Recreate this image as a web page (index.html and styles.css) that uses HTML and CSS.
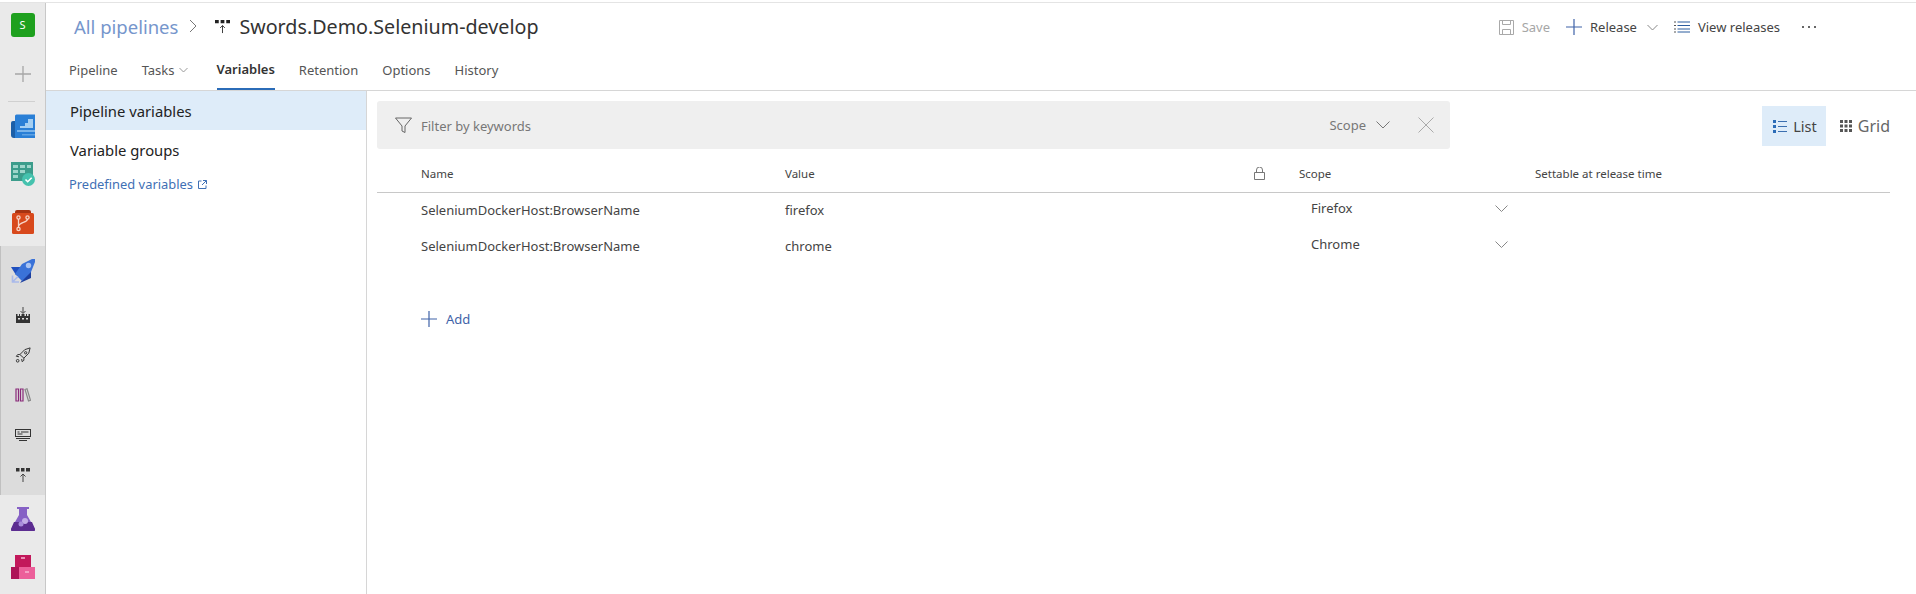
FILE: index.html
```html
<!DOCTYPE html>
<html>
    <head>
        <title>Swords.Demo.Selenium-develop - Variables</title>
        <link rel="stylesheet" href="styles.css">
    </head>
    <body>
        <div class="app">
            <!-- Left navigation rail -->
            <nav class="rail">
                <div class="rail-item rail-org"><span class="org-badge">S</span></div>
                <div class="rail-item rail-plus">
                    <svg width="18" height="18" viewBox="0 0 18 18"><path d="M9 1v16M1 9h16" stroke="#a6a6a6" stroke-width="1.3" fill="none"/></svg>
                </div>
                <div class="rail-divider"></div>
                <div class="rail-item">
                    <svg width="24" height="24" viewBox="0 0 24 24">
                        <path d="M0 9a2 2 0 0 1 2-2h4v17H3a3 3 0 0 1-3-3z" fill="#1b5fa8"/>
                        <path d="M4 2a1.5 1.5 0 0 1 1.5-1.5H24V24H4z" fill="#2a7fd6"/>
                        <path d="M9 12h5V9h3V5h5v9H9z" fill="#a5cff2"/>
                        <path d="M6 16h18v2H6z" fill="#7ab4ea"/>
                        <path d="M11 20h13v1.5H11z" fill="#5ea3e4"/>
                    </svg>
                </div>
                <div class="rail-item">
                    <svg width="24" height="24" viewBox="0 0 24 24">
                        <rect x="0" y="0" width="22" height="19" fill="#3c9d8c"/>
                        <path d="M2 3h5v3H2zM9 3h5v3H9zM16 3h4v3h-4zM2 8h5v3H2zM9 8h5v3H9zM2 13h5v3H2z" fill="#9ed6cb"/>
                        <circle cx="17.5" cy="17.5" r="6.5" fill="#45c2ae"/>
                        <path d="M14.5 17.5l2.2 2.2 4-4" stroke="#fff" stroke-width="1.6" fill="none"/>
                    </svg>
                </div>
                <div class="rail-item">
                    <svg width="24" height="24" viewBox="0 0 24 24">
                        <path d="M4 2a2 2 0 0 1 2-2h12a2 2 0 0 1 2 2v2H4z" fill="#a63312"/>
                        <rect x="1" y="3" width="22" height="21" rx="1.5" fill="#d8491c"/>
                        <g stroke="#f7d5c8" stroke-width="1.3" fill="none">
                            <circle cx="7.5" cy="7.5" r="1.6"/><circle cx="16.5" cy="7.5" r="1.6"/><circle cx="7.5" cy="19" r="1.6"/>
                            <path d="M7.5 9v8.500M16.5 9c0 4-9 3-9 8"/>
                        </g>
                    </svg>
                </div>
                <div class="rail-group">
                    <div class="rail-item">
                        <svg width="24" height="24" viewBox="0 0 24 24">
                            <path d="M0 8h11L5 16z" fill="#1f4fbf"/>
                            <path d="M9 24l11-5v-9z" fill="#1d3f9e"/>
                            <path d="M11 5L21 0h3v3l-4 10-9 9-7-7z" fill="#3a72d8"/>
                            <circle cx="17.5" cy="6.5" r="2.7" fill="#a9c3f2"/>
                            <path d="M1.500 16.500V23H8M1.500 23L7 17.500" stroke="#a9b9ea" stroke-width="1.6" fill="none"/>
                        </svg>
                    </div>
                    <div class="rail-sub">
                        <svg width="16" height="16" viewBox="0 0 16 16">
                            <path d="M8 0v6M5.500 4L8 6.500 10.500 4" stroke="#444" stroke-width="1" fill="none"/>
                            <path d="M1 7h1.500v2H4V7h1v2h1.500V7h3v2H11V7h1v2h1.500V7H15v9H1z" fill="#333"/>
                            <path d="M3 11h2v1.500H3zM7 11h2v1.500H7zM11 11h2v1.500h-2z" fill="#ddd"/>
                        </svg>
                    </div>
                    <div class="rail-sub">
                        <svg width="16" height="16" viewBox="-1 -1 18 18" fill="none" stroke="#333" stroke-width="1.1">
                            <path d="M4.500 7.500L10 2l6-2-1.500 6L9 11.500z"/>
                            <path d="M4.500 7.500H2L.5 9.500l3 .5M9 11.500V14l-2 1.500-.5-3"/>
                            <circle cx="11" cy="5.500" r="1.3"/>
                            <circle cx="2" cy="14.500" r="1.5"/>
                        </svg>
                    </div>
                    <div class="rail-sub">
                        <svg width="16" height="16" viewBox="0 0 16 16" fill="none" stroke-width="1.2">
                            <path d="M1 2h2.500v12H1zM5.500 2H8v12H5.500z" stroke="#8a2a7a"/>
                            <path d="M10 2.500l2-.7 3.500 11.500-2 .7z" stroke="#888"/>
                        </svg>
                    </div>
                    <div class="rail-sub">
                        <svg width="16" height="16" viewBox="0 0 16 16" fill="none" stroke="#333" stroke-width="1">
                            <rect x=".5" y="2.500" width="15" height="7"/>
                            <path d="M2.500 5h2M6 5h7.500M2.500 7h5M1 11.500h14M4 13.500h8"/>
                        </svg>
                    </div>
                    <div class="rail-sub">
                        <svg width="16" height="16" viewBox="0 0 16 16">
                            <path d="M1 1h3.500v3.500H1zM6 1h3.500v3.500H6zM11 1h4v3.500h-4z" fill="#333"/>
                            <path d="M8 15V7M5.500 9.500L8 7l2.500 2.500" stroke="#444" stroke-width="1" fill="none"/>
                        </svg>
                    </div>
                </div>
                <div class="rail-item">
                    <svg width="24" height="24" viewBox="0 0 24 24">
                        <path d="M6 0h12v2h-2v6l8 14a1.500 1.500 0 0 1-1.500 2h-21A1.500 1.500 0 0 1 0 22L8 8V2H6z" fill="#8661c5"/>
                        <path d="M3 15h18l3 7a1.500 1.500 0 0 1-1.500 2h-21A1.500 1.500 0 0 1 0 22z" fill="#5c2d91"/>
                        <circle cx="14" cy="14" r="3" fill="#c3aee6"/>
                        <circle cx="10" cy="17" r="2.5" fill="#a98ddb"/>
                    </svg>
                </div>
                <div class="rail-item">
                    <svg width="24" height="24" viewBox="0 0 24 24">
                        <rect x="4" y="0" width="16" height="12" fill="#c2185b"/>
                        <rect x="0" y="12" width="12" height="12" fill="#ad1457"/>
                        <rect x="8" y="12" width="16" height="12" fill="#ec5f9a"/>
                        <path d="M10 3h4M14 17h4" stroke="#f7b6d2" stroke-width="1.5"/>
                    </svg>
                </div>
            </nav>

            <div class="page">
                <header class="page-header">
                    <div class="title-row">
                        <a class="crumb">All pipelines</a>
                        <svg class="crumb-sep" width="9" height="14" viewBox="0 0 9 14"><path d="M1 1l6 6-6 6" stroke="#777" stroke-width="1" fill="none"/></svg>
                        <svg class="title-icon" width="15" height="15" viewBox="0 0 16 16">
                            <path d="M0 1h4v3.500H0zM6 1h4v3.500H6zM12 1h4v3.500h-4z" fill="#222"/>
                            <path d="M8 15V7M5.500 9.500L8 7l2.500 2.500" stroke="#333" stroke-width="1" fill="none"/>
                        </svg>
                        <h1 class="title">Swords.Demo.Selenium-develop</h1>
                        <div class="actions">
                            <span class="action action-off">
                                <svg width="15" height="15" viewBox="0 0 15 15" fill="none" stroke="#a9a9a9"><path d="M.5.5h14v14H.5zM3.500.5v4h8v-4M3.500 14.500v-5h8v5"/></svg>
                                Save
                            </span>
                            <span class="action action-release">
                                <svg width="16" height="16" viewBox="0 0 16 16"><path d="M8 0v16M0 8h16" stroke="#3f63a8" stroke-width="1.2" fill="none"/></svg>
                                Release
                                <svg class="chev" width="11" height="7" viewBox="0 0 11 7"><path d="M.5 1l5 5 5-5" stroke="#888" fill="none"/></svg>
                            </span>
                            <span class="action action-view">
                                <svg width="16" height="12" viewBox="0 0 16 12" fill="none"><path d="M3.500 1H16M3.500 4.500H16M3.500 8H16M3.500 11H16" stroke="#2b5c9e"/><path d="M0 1h2M0 4.500h2M0 8h2M0 11h2" stroke="#555"/></svg>
                                View releases
                            </span>
                            <span class="more"><i></i><i></i><i></i></span>
                        </div>
                    </div>
                    <div class="tabs">
                        <span class="tab">Pipeline</span>
                        <span class="tab tab-menu">Tasks<svg class="tab-chev" width="9" height="6" viewBox="0 0 9 6"><path d="M.5 1l4 4 4-4" stroke="#999" fill="none"/></svg></span>
                        <span class="tab tab-active">Variables</span>
                        <span class="tab">Retention</span>
                        <span class="tab">Options</span>
                        <span class="tab">History</span>
                    </div>
                </header>

                <div class="content">
                    <aside class="side">
                        <div class="side-item side-item-on">Pipeline variables</div>
                        <div class="side-item">Variable groups</div>
                        <a class="side-link">Predefined variables
                            <svg width="9" height="9" viewBox="0 0 9 9" fill="none" stroke="#3f70b5"><path d="M3.500 1H.5v7.500H8V5.500M5 .5h3.500V4M8.500.5L4 5"/></svg>
                        </a>
                    </aside>

                    <main class="vars">
                        <div class="vars-top">
                            <div class="filter">
                                <svg width="17" height="17" viewBox="0 0 17 17" fill="none" stroke="#666"><path d="M.5 1h16L10 9v6.500l-3-1.500V9z"/></svg>
                                <span class="filter-text">Filter by keywords</span>
                                <span class="filter-scope">Scope</span>
                                <svg class="filter-chev" width="14" height="8" viewBox="0 0 14 8"><path d="M.5.5L7 7 13.500.5" stroke="#777" fill="none"/></svg>
                                <svg class="filter-x" width="16" height="16" viewBox="0 0 16 16"><path d="M.5.5l15 15M15.500.5l-15 15" stroke="#aaa" fill="none"/></svg>
                            </div>
                            <div class="views">
                                <span class="view view-on">
                                    <svg width="14" height="13" viewBox="0 0 14 13"><path d="M0 0h3v3H0zM0 5h3v3H0zM0 10h3v3H0z" fill="#2b6cb8"/><path d="M5 1.500h9M5 6.500h9M5 11.500h9" stroke="#3b6fb0"/></svg>
                                    List
                                </span>
                                <span class="view">
                                    <svg width="12" height="12" viewBox="0 0 12 12" fill="#555"><path d="M0 0h3v3H0zM4.500 0h3v3h-3zM9 0h3v3H9zM0 4.500h3v3H0zM4.500 4.500h3v3h-3zM9 4.500h3v3H9zM0 9h3v3H0zM4.500 9h3v3h-3zM9 9h3v3H9z"/></svg>
                                    Grid
                                </span>
                            </div>
                        </div>

                        <div class="grid grid-head">
                            <span></span>
                            <span>Name</span>
                            <span>Value</span>
                            <span class="lock-cell">
                                <svg width="11" height="13" viewBox="0 0 11 13" fill="none" stroke="#777"><path d="M.5 5.500h10v7H.5zM2.500 5.500V3a3 3 0 0 1 6 0v2.500"/></svg>
                            </span>
                            <span>Scope</span>
                            <span>Settable at release time</span>
                        </div>
                        <div class="grid-rows">
                            <div class="grid grid-row">
                                <span></span>
                                <span>SeleniumDockerHost:BrowserName</span>
                                <span>firefox</span>
                                <span></span>
                                <span class="scope">Firefox<svg width="13" height="7" viewBox="0 0 13 7"><path d="M.5.5l6 6 6-6" stroke="#888" fill="none"/></svg></span>
                                <span></span>
                            </div>
                            <div class="grid grid-row">
                                <span></span>
                                <span>SeleniumDockerHost:BrowserName</span>
                                <span>chrome</span>
                                <span></span>
                                <span class="scope">Chrome<svg width="13" height="7" viewBox="0 0 13 7"><path d="M.5.5l6 6 6-6" stroke="#888" fill="none"/></svg></span>
                                <span></span>
                            </div>
                        </div>
                        <div class="add">
                            <svg width="16" height="16" viewBox="0 0 16 16"><path d="M8 0v16M0 8h16" stroke="#3f63a8" stroke-width="1.2" fill="none"/></svg>
                            Add
                        </div>
                    </main>
                </div>
            </div>
        </div>
    </body>
</html>
```

FILE: styles.css
```css
* {
    box-sizing: border-box;
}
html,
body {
    margin: 0;
    height: 100%;
    overflow: hidden;
}
body {
    font-family: "Noto Sans", "Open Sans", Arial, sans-serif;
    font-size: 13px;
    color: #333;
    background: white;
}
.app {
    display: flex;
    height: 594px;
    margin-top: 2px;
    border-top: 1px solid #e4e4e4;
}

/* left rail */
.rail {
    width: 46px;
    flex: none;
    background: #eaeaea;
    border-right: 1px solid #c8c8c8;
}
.rail-item {
    height: 48px;
    display: flex;
    align-items: center;
    justify-content: center;
}
.rail-org {
    height: 44px;
}
.org-badge {
    width: 24px;
    height: 24px;
    background: #1ea01e;
    border-radius: 3px;
    color: white;
    font-size: 11px;
    text-align: center;
    line-height: 24px;
}
.rail-plus {
    height: 54px;
}
.rail-divider {
    height: 1px;
    margin: 0 10px 0 8px;
    background: #d0d0d0;
}
.rail-group {
    background: #dcdcdc;
    border-left: 1px solid #c0c0c0;
    padding-top: 1px;
}
.rail-sub {
    height: 40px;
    display: flex;
    align-items: center;
    justify-content: center;
}

/* header */
.page {
    flex: 1;
    min-width: 0;
    display: flex;
    flex-direction: column;
}
.page-header {
    height: 88px;
    border-bottom: 1px solid #d6d6d6;
    flex: none;
}
.title-row {
    height: 46px;
    display: flex;
    align-items: center;
    padding-left: 28px;
}
.crumb {
    font-size: 18.5px;
    color: #7696cc;
}
.crumb-sep {
    margin-left: 11px;
}
.title-icon {
    margin-left: 17px;
}
.title {
    margin: 0 0 0 9px;
    font-size: 19.7px;
    font-weight: 400;
    color: #333;
}
.actions {
    margin-left: auto;
    display: flex;
    align-items: center;
    padding: 2px 100px 0 0;
}
.action {
    display: flex;
    align-items: center;
    gap: 8px;
    color: #444;
}
.action-off {
    color: #a6a6a6;
}
.action-release {
    margin-left: 16px;
}
.action-release .chev {
    margin-left: 2px;
}
.action-view {
    margin-left: 16px;
}
.more {
    margin-left: 22px;
    display: flex;
    gap: 4px;
}
.more i {
    width: 2px;
    height: 2px;
    background: #333;
    border-radius: 50%;
}
.tabs {
    height: 41px;
    display: flex;
    padding-left: 23px;
    gap: 24px;
}
.tab {
    height: 41px;
    color: #555;
    display: flex;
    align-items: center;
}
.tab-menu {
    padding-right: 5px;
}
.tab-chev {
    margin-left: 4px;
}
.tab-active {
    color: #333;
    font-weight: 600;
    border-bottom: 2px solid #2b6cb8;
}

/* side panel */
.content {
    flex: 1;
    display: flex;
    min-height: 0;
}
.side {
    width: 321px;
    flex: none;
    border-right: 1px solid #d6d6d6;
}
.side-item {
    height: 39px;
    line-height: 41px;
    padding-left: 24px;
    font-size: 14.8px;
    color: #222;
}
.side-item-on {
    background: #deecf9;
}
.side-link {
    display: flex;
    align-items: center;
    gap: 5px;
    margin-top: 6px;
    padding-left: 23px;
    font-size: 12.9px;
    color: #3f70b5;
}

/* variables table */
.vars {
    flex: 1;
    min-width: 0;
    padding: 10px 26px 0 10px;
}
.vars-top {
    display: flex;
    justify-content: space-between;
    align-items: center;
    height: 48px;
}
.filter {
    width: 1073px;
    height: 48px;
    background: #efefef;
    border-radius: 3px;
    display: flex;
    align-items: center;
    padding: 0 16px 0 18px;
}
.filter-text {
    margin-left: 9px;
    color: #777;
    padding-top: 2px;
}
.filter-scope {
    margin-left: auto;
    color: #777;
}
.filter-chev {
    margin-left: 10px;
}
.filter-x {
    margin-left: 28px;
}
.views {
    display: flex;
    align-items: center;
    font-size: 16px;
    padding-top: 2px;
}
.view {
    height: 40px;
    display: flex;
    align-items: center;
    gap: 6px;
    padding: 0 9px 0 11px;
    color: #666;
}
.view-on {
    background: #deecf9;
    color: #444;
    margin-right: 3px;
    font-size: 14.5px;
}
.views .view:last-child {
    padding-right: 0;
}
.grid {
    display: grid;
    grid-template-columns: 44px 364px 465px 49px 236px 1fr;
    align-items: center;
}
.grid-head {
    height: 44px;
    padding-top: 5px;
    font-size: 11.5px;
    color: #444;
    border-bottom: 1px solid #c8c8c8;
}
.lock-cell {
    display: flex;
    padding-left: 4px;
}
.grid-rows {
    margin-top: -1px;
}
.grid-row {
    height: 36px;
    color: #444;
}
.scope {
    display: flex;
    justify-content: space-between;
    align-items: center;
    padding: 0 27px 4px 12px;
}
.add {
    display: flex;
    align-items: center;
    gap: 9px;
    margin-top: 46px;
    padding-left: 44px;
    color: #3f63a8;
}
```
